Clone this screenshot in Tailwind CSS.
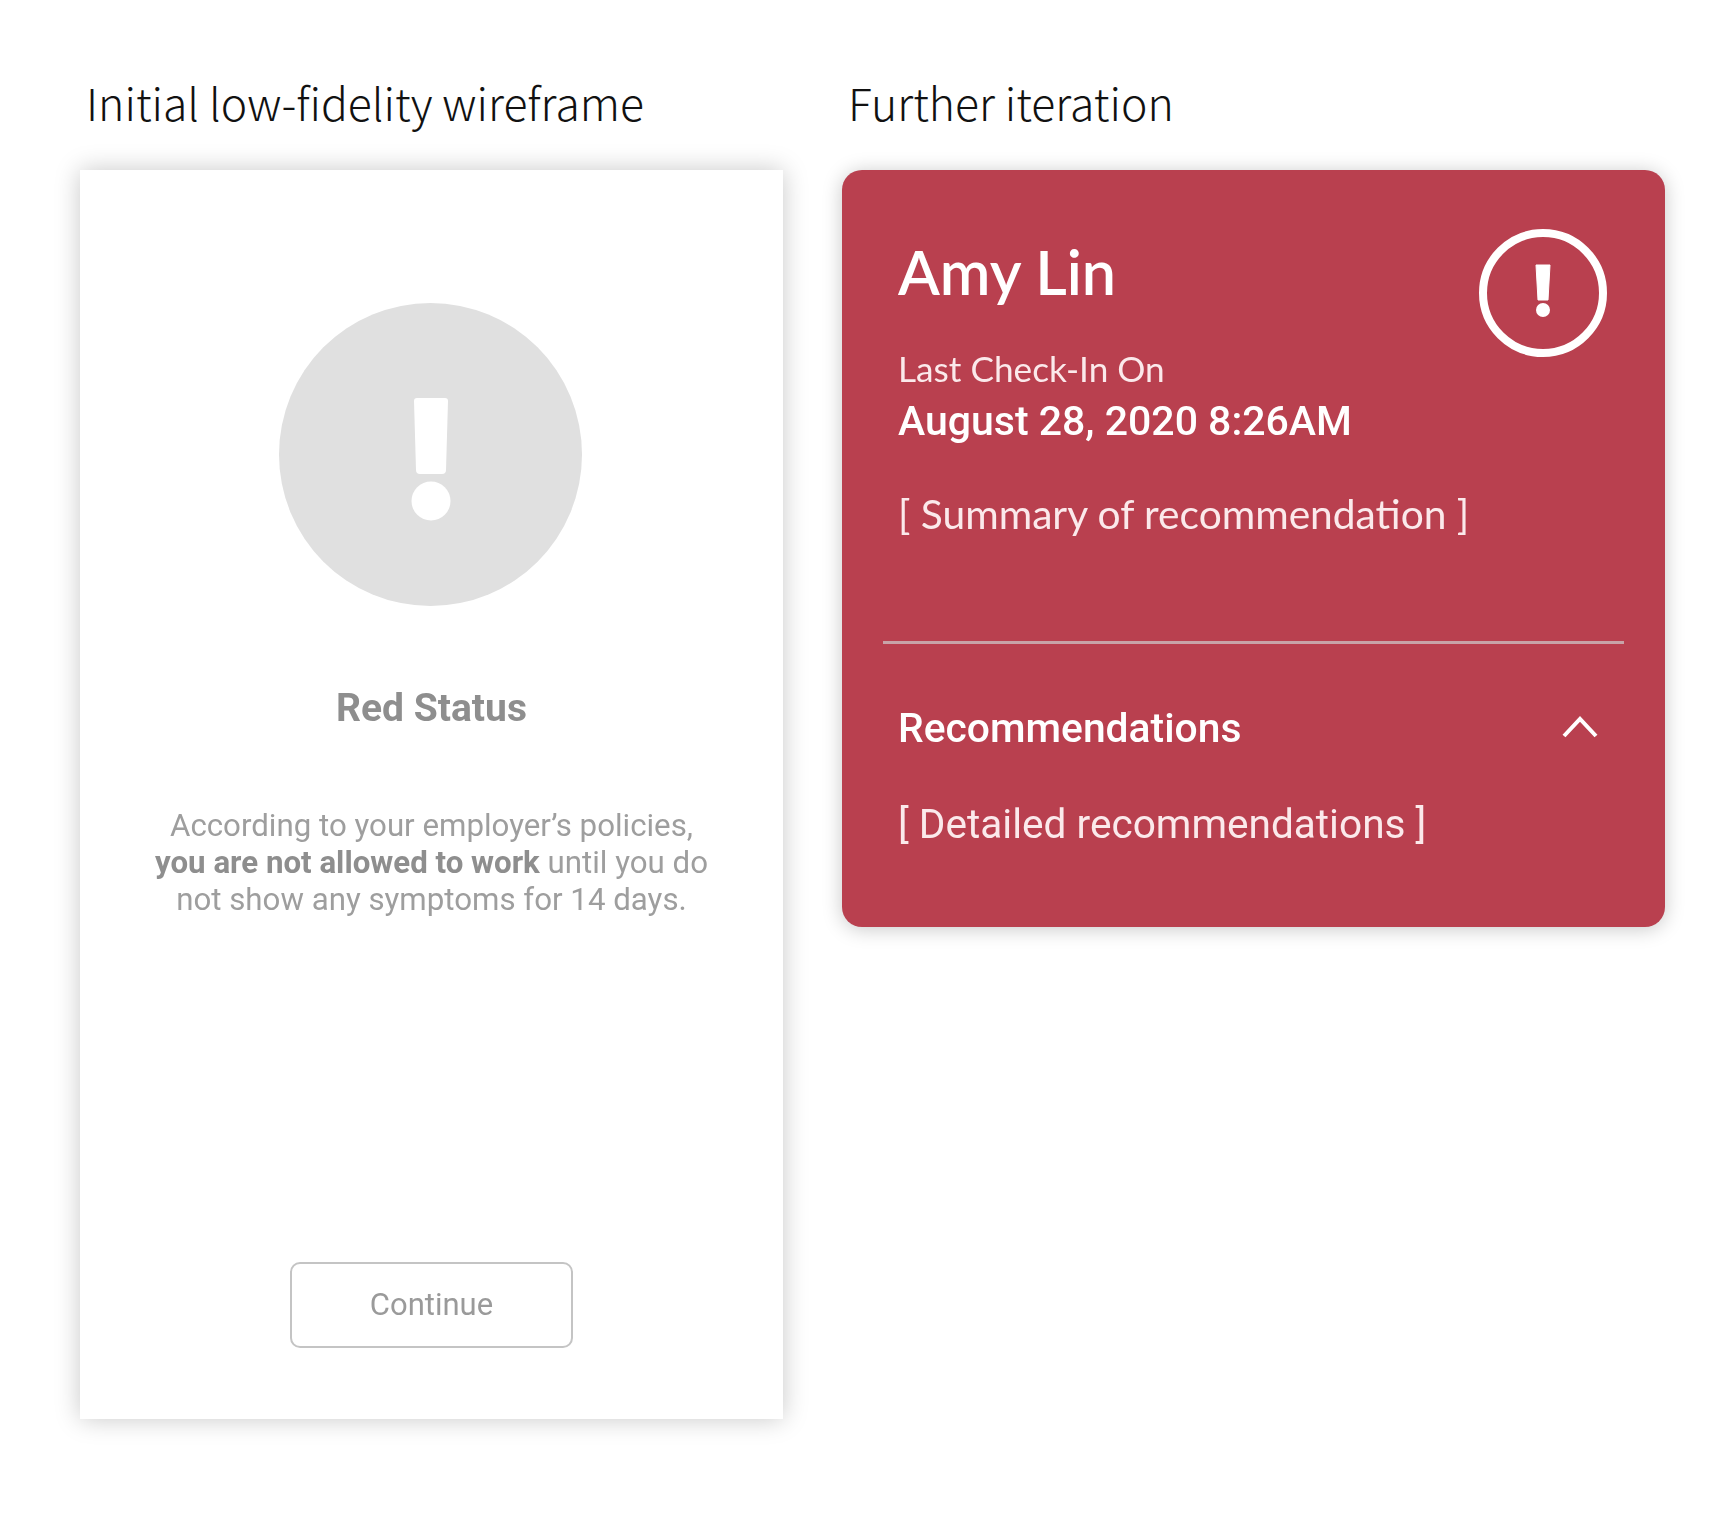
<!DOCTYPE html>
<html lang="en">
<head>
  <meta charset="UTF-8" />
  <title>Wireframe iterations</title>
  <script src="https://cdn.jsdelivr.net/npm/@tailwindcss/browser@4"></script>
</head>
<body class="bg-white w-[1730px] h-[1528px] overflow-hidden">
  <div class="flex items-start pl-[80px] pt-[70px] gap-[59px]">

    <!-- Wireframe -->
    <section class="w-[703px]">
      <h2 class="h-[63px] pl-[6px] text-[44.5px] leading-[63px] font-light text-[#111] font-['Noto_Sans_CJK_JP',sans-serif] whitespace-nowrap">Initial low-fidelity wireframe</h2>
      <div class="mt-[37px] h-[1249px] bg-white shadow-[0_0_24px_rgba(0,0,0,0.22)]">
        <div class="flex flex-col items-center font-['Roboto',sans-serif] blur-[0.5px]">
          <div class="mt-[133px] mr-[2px] w-[303px] h-[303px] rounded-full bg-[#e0e0e0] flex items-center justify-center">
            <svg width="40" height="124" viewBox="0 0 40 124" class="mt-[8px]">
              <path d="M3 4 a3 3 0 0 1 3-3 h28 a3 3 0 0 1 3 3 l-2 69 a4 4 0 0 1-4 4 h-22 a4 4 0 0 1-4-4 z" fill="#fff"/>
              <ellipse cx="20" cy="104" rx="19.500" ry="19.500" fill="#fff"/>
            </svg>
          </div>
          <h3 class="mt-[78px] text-[39px] leading-[48px] font-bold text-[#8e8e8e]">Red Status</h3>
          <p class="mt-[75px] text-[31.250px] leading-[37px] text-[#9e9e9e] text-center whitespace-nowrap">According to your employer’s policies,<br><b class="font-bold text-[#8e8e8e]">you are not allowed to work</b> until you do<br>not show any symptoms for 14 days.</p>
          <button class="mt-[344px] w-[283px] h-[86px] border-2 border-[#c4c4c4] rounded-[10px] text-[31px] text-[#9a9a9a]">Continue</button>
        </div>
      </div>
    </section>

    <!-- Red card -->
    <section class="w-[823px]">
      <h2 class="h-[63px] pl-[6px] text-[44.5px] leading-[63px] font-light text-[#111] font-['Noto_Sans_CJK_JP',sans-serif] whitespace-nowrap">Further iteration</h2>
      <div class="mt-[37px] h-[757px] rounded-[20px] bg-[#b9404f] text-white shadow-[0_2px_20px_rgba(0,0,0,0.22)] px-[41px]">
        <div class="blur-[0.5px]">
          <div class="flex justify-between items-start pl-[15px] pr-[17px]">
            <div>
              <div class="pt-[63px] text-[61px] leading-[78px] font-semibold font-['Lato',sans-serif]">Amy Lin</div>
              <div class="mt-[36px] text-[35.200px] leading-[42px] font-normal text-[#fbe9eb] font-['Lato',sans-serif]">Last Check-In On</div>
              <div class="mt-[8px] text-[41px] leading-[48px] font-medium font-['Roboto',sans-serif] whitespace-nowrap">August 28, 2020 8:26AM</div>
            </div>
            <svg width="128" height="128" viewBox="0 0 128 128" class="mt-[59px]">
              <circle cx="64" cy="64" r="60" fill="none" stroke="#fff" stroke-width="8"/>
              <path d="M57 36 h14 l-2 35 h-10 z" fill="#fff" stroke="#fff" stroke-width="1" stroke-linejoin="round"/>
              <circle cx="64" cy="81" r="7" fill="#fff"/>
            </svg>
          </div>
          <div class="mt-[44px] pl-[15px] text-[40.700px] leading-[50px] font-normal text-[#fbe9eb] font-['Lato',sans-serif]">[ Summary of recommendation ]</div>
          <div class="mt-[102px] h-[3px] bg-[#c8a3a8]"></div>
          <div class="mt-[60px] pl-[15px] pr-[24px] flex items-center justify-between">
            <span class="text-[40.800px] leading-[48px] font-medium font-['Roboto',sans-serif]">Recommendations</span>
            <svg width="40" height="26" viewBox="0 0 40 26" class="-mt-[4px]">
              <path d="M4 23 L20 6 L36 23" fill="none" stroke="#fff" stroke-width="4"/>
            </svg>
          </div>
          <div class="mt-[48px] pl-[15px] text-[40.600px] leading-[48px] font-normal text-[#fbe9eb] font-['Roboto',sans-serif]">[ Detailed recommendations ]</div>
        </div>
      </div>
    </section>
  </div>
</body>
</html>
